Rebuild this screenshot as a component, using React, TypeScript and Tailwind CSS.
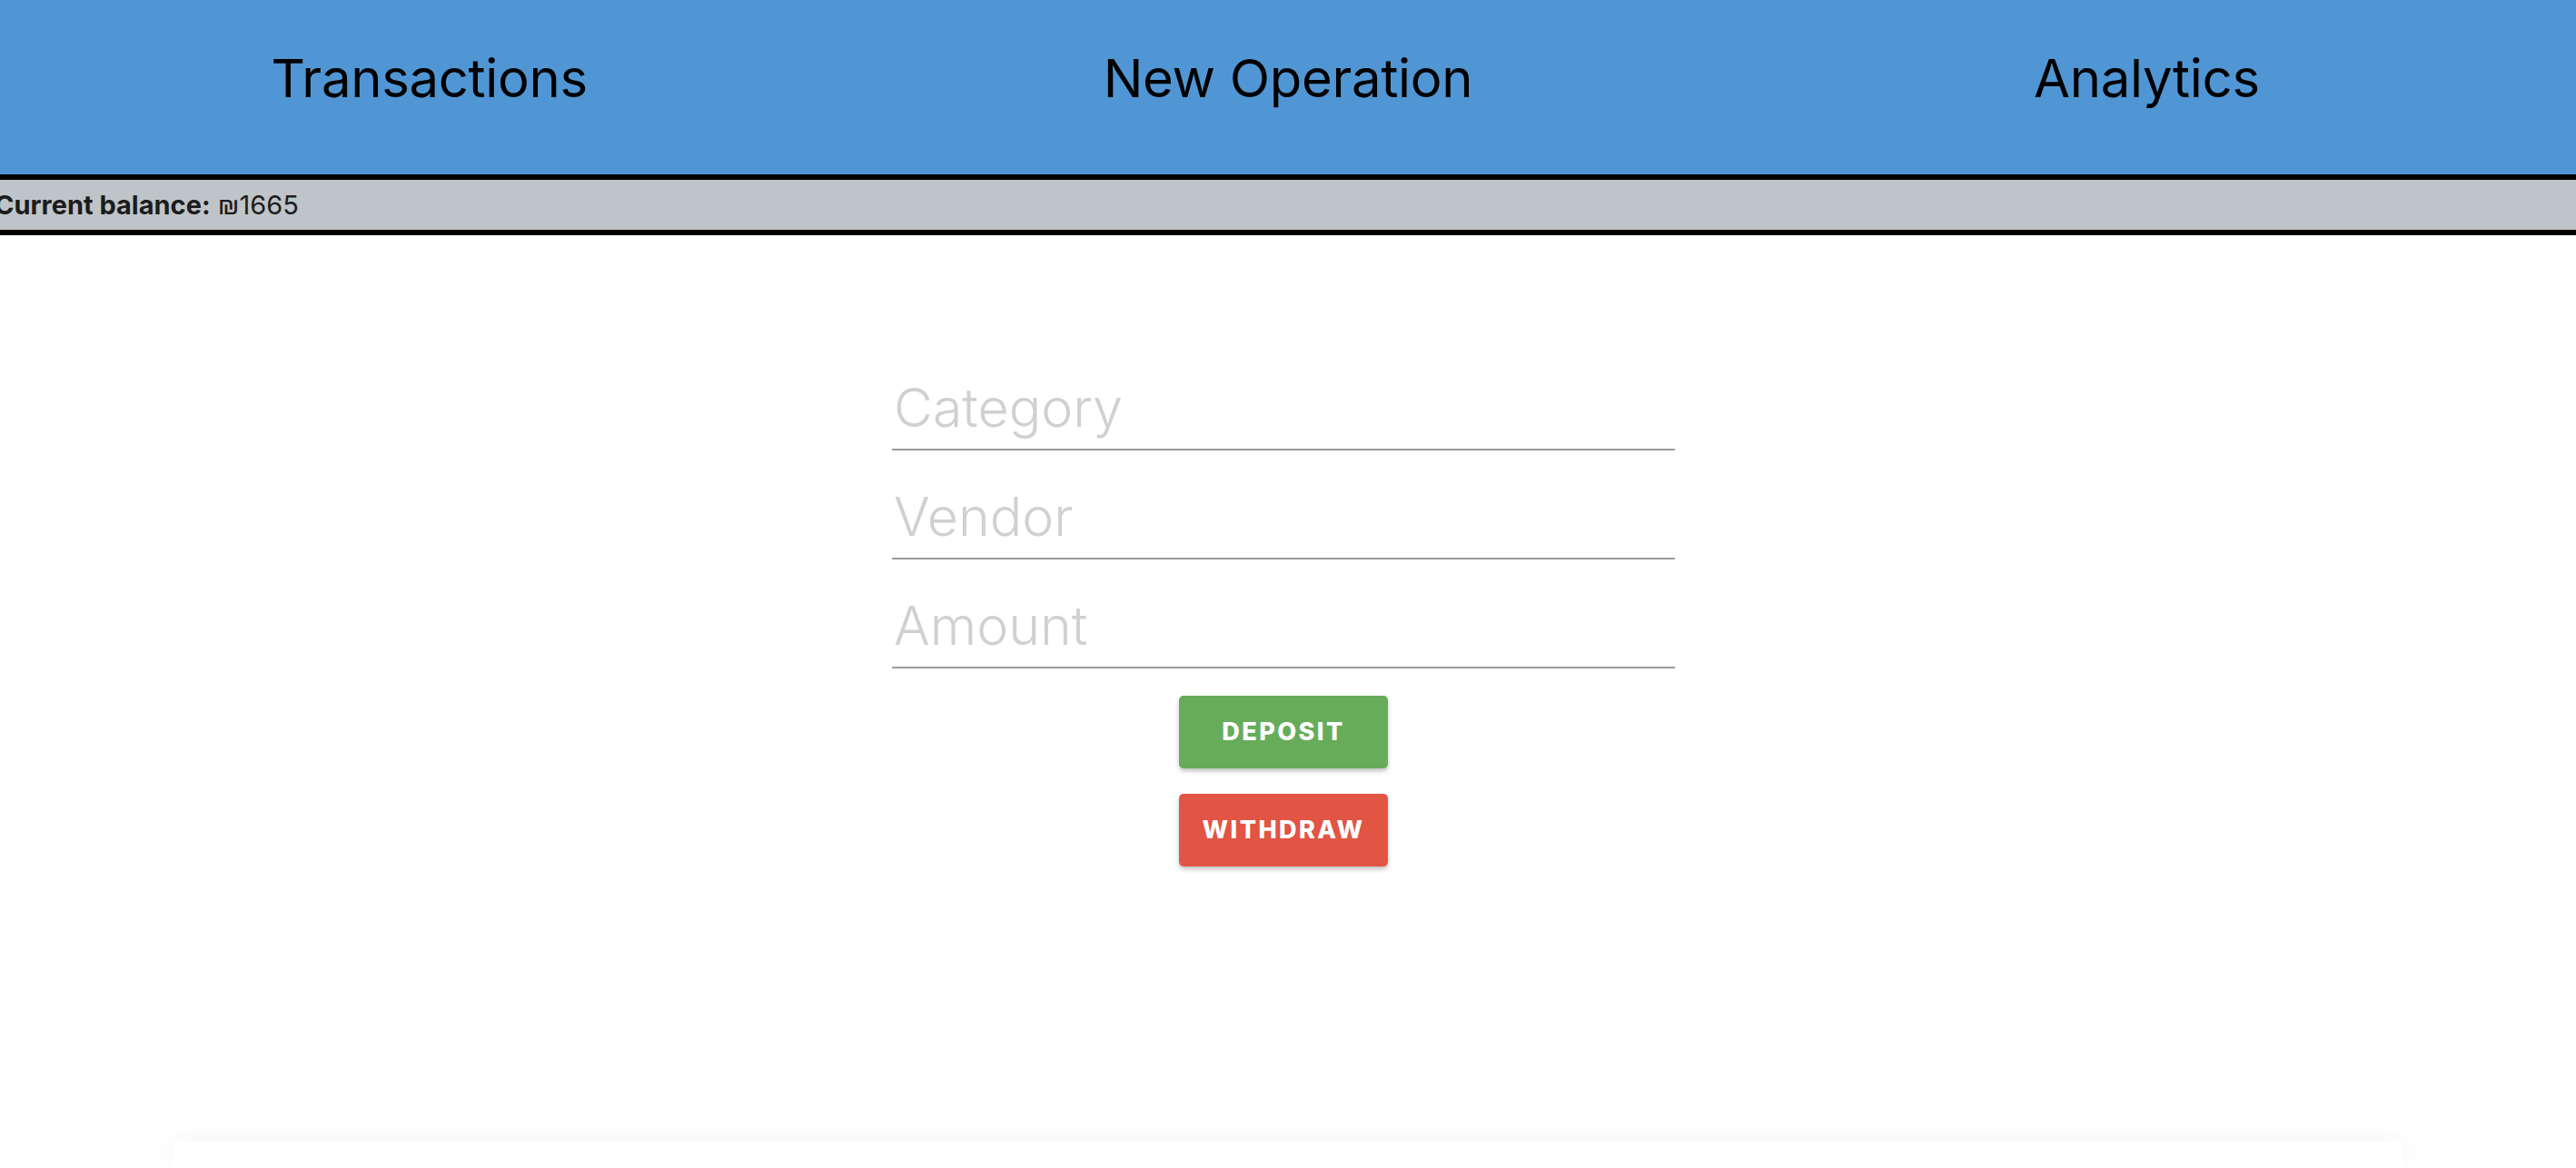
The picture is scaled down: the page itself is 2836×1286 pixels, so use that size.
import { useState } from 'react'

const tabs = ['Transactions', 'New Operation', 'Analytics']

export default function App() {
  const [form, setForm] = useState({ category: '', vendor: '', amount: '' })
  const balance = 1665

  return (
    <div className="min-h-[1286px] flex flex-col bg-white font-['Inter',sans-serif] overflow-hidden">
      {/* Nav */}
      <nav className="h-[192px] grid grid-cols-3 bg-[#5096d4]">
        {tabs.map((t) => (
          <div key={t} className="flex justify-center pt-[57px]">
            <span className="text-[58px] leading-none tracking-[-0.005em] text-black cursor-pointer">{t}</span>
          </div>
        ))}
      </nav>

      {/* Balance */}
      <div className="h-[67px] flex items-center bg-[#bfc4c8] border-y-[6px] border-black">
        <p className="-ml-[6px] text-[29px] text-[#1c1c1c] whitespace-nowrap">
          <span className="font-bold">Current balance:</span> ₪{balance}
        </p>
      </div>

      {/* New operation form */}
      <main className="flex flex-col items-center pr-[10px] pt-[155px]">
        <div className="w-[862px] flex flex-col gap-[38px]">
          <input
            className="h-[82px] w-full pb-[10px] px-[2px] text-[59px] font-light text-[#333] placeholder:text-[#d0d0d0] border-b-2 border-[#9a9a9a] outline-none"
            placeholder="Category"
            value={form.category}
            onChange={e => setForm({ ...form, category: e.target.value })}
          />
          <input
            className="h-[82px] w-full pb-[10px] px-[2px] text-[59px] font-light text-[#333] placeholder:text-[#d0d0d0] border-b-2 border-[#9a9a9a] outline-none"
            placeholder="Vendor"
            value={form.vendor}
            onChange={e => setForm({ ...form, vendor: e.target.value })}
          />
          <input
            className="h-[82px] w-full pb-[10px] px-[2px] text-[59px] font-light text-[#333] placeholder:text-[#d0d0d0] border-b-2 border-[#9a9a9a] outline-none"
            placeholder="Amount"
            type="text"
            value={form.amount}
            onChange={e => setForm({ ...form, amount: e.target.value })}
          />
        </div>

        <div className="mt-[30px] flex flex-col items-center gap-[28px]">
          <button className="w-[230px] h-[80px] rounded-[5px] bg-[#67ac5b] text-white text-[27px] font-extrabold tracking-[0.09em] shadow-[0_3px_5px_rgba(0,0,0,0.25)]">
            DEPOSIT
          </button>
          <button className="w-[230px] h-[80px] rounded-[5px] bg-[#e25443] text-white text-[27px] font-extrabold tracking-[0.09em] shadow-[0_3px_5px_rgba(0,0,0,0.25)]">
            WITHDRAW
          </button>
        </div>
      </main>

      <div className="mt-auto mx-[190px] h-[30px] rounded-t-[8px] bg-white shadow-[0_-4px_24px_rgba(0,0,0,0.04)]" />
    </div>
  )
}
